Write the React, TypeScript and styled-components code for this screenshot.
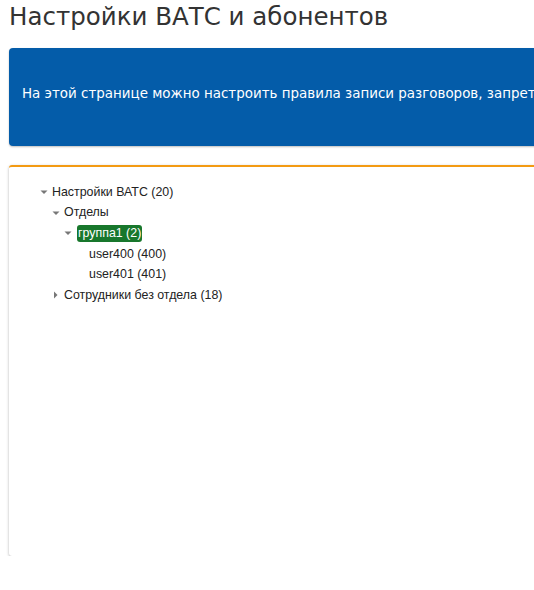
import React from "react";
import styled, { createGlobalStyle } from "styled-components";

const Global = createGlobalStyle`
  html, body { margin: 0; padding: 0; background: #fff; overflow: hidden; }
  body { font-family: "DejaVu Sans", sans-serif; color: #333; }
`;

const Page = styled.div`
  width: 1100px;
  padding: 4px 9px 0 9px;
`;

const Title = styled.h1`
  margin: 0 0 18px 0;
  font-family: "DejaVu Sans", sans-serif;
  font-weight: 400;
  font-size: 24.5px;
  line-height: 26px;
  color: #333;
`;

const Banner = styled.div`
  background: #045ca9;
  border-radius: 4px;
  box-shadow: 0 1px 2px rgba(0, 0, 0, 0.25);
  padding: 36px 13px 42px 13px;
  margin-bottom: 19px;
`;

const BannerText = styled.p`
  margin: 0;
  font-family: "DejaVu Sans", sans-serif;
  font-size: 13.45px;
  line-height: 20px;
  color: #fff;
  white-space: nowrap;
`;

const Panel = styled.div`
  background: #fff;
  border-top: 2px solid #f39a12;
  border-radius: 3px;
  box-shadow: 0 1px 3px rgba(0, 0, 0, 0.3);
  height: 374px;
  padding: 15px 0 0 31px;
  box-sizing: content-box;
`;

const TreeList = styled.ul`
  list-style: none;
  margin: 0;
  padding: 0;
`;

const Node = styled.li<{ $level: number }>`
  display: flex;
  align-items: center;
  height: 20.6px;
  padding-left: ${(p) => p.$level * 12}px;
  font-family: "Liberation Sans", Arial, sans-serif;
  font-size: 12.4px;
  color: #222;
`;

const Toggle = styled.span`
  width: 12px;
  height: 12px;
  display: inline-flex;
  align-items: center;
  justify-content: flex-start;
  flex: 0 0 12px;
`;

const Label = styled.span<{ $selected?: boolean; $leaf?: boolean }>`
  display: inline-block;
  line-height: 17px;
  padding: 0 1px;
  border-radius: 3px;
  margin-left: ${(p) => (p.$selected ? 1 : p.$leaf ? 0 : -1)}px;
  background: ${(p) => (p.$selected ? "#18772c" : "transparent")};
  color: ${(p) => (p.$selected ? "#fff" : "inherit")};
`;

type Item = {
  label: string;
  level: number;
  state?: "open" | "closed";
  selected?: boolean;
};

const items: Item[] = [
  { label: "Настройки ВАТС (20)", level: 0, state: "open" },
  { label: "Отделы", level: 1, state: "open" },
  { label: "группа1 (2)", level: 2, state: "open", selected: true },
  { label: "user400 (400)", level: 3 },
  { label: "user401 (401)", level: 3 },
  { label: "Сотрудники без отдела (18)", level: 1, state: "closed" },
];

const Arrow = ({ state }: { state: "open" | "closed" }) => (
  <svg width="8" height="8" viewBox="0 0 8 8">
    {state === "open" ? (
      <path d="M0.5 2.5 L7.5 2.5 L4 6 Z" fill="#777" />
    ) : (
      <path d="M2 0.5 L5.5 4 L2 7.5 Z" fill="#777" />
    )}
  </svg>
);

export default function App() {
  return (
    <>
      <Global />
      <Page>
        <Title>Настройки ВАТС и абонентов</Title>
        <Banner>
          <BannerText>
            На этой странице можно настроить правила записи разговоров, запреты на исходящие звонки и другие параметры абонентов.
          </BannerText>
        </Banner>
        <Panel>
          <TreeList>
            {items.map((it) => (
              <Node key={it.label} $level={it.level}>
                <Toggle>{it.state ? <Arrow state={it.state} /> : null}</Toggle>
                <Label $selected={it.selected} $leaf={!it.state}>
                  {it.label}
                </Label>
              </Node>
            ))}
          </TreeList>
        </Panel>
      </Page>
    </>
  );
}
